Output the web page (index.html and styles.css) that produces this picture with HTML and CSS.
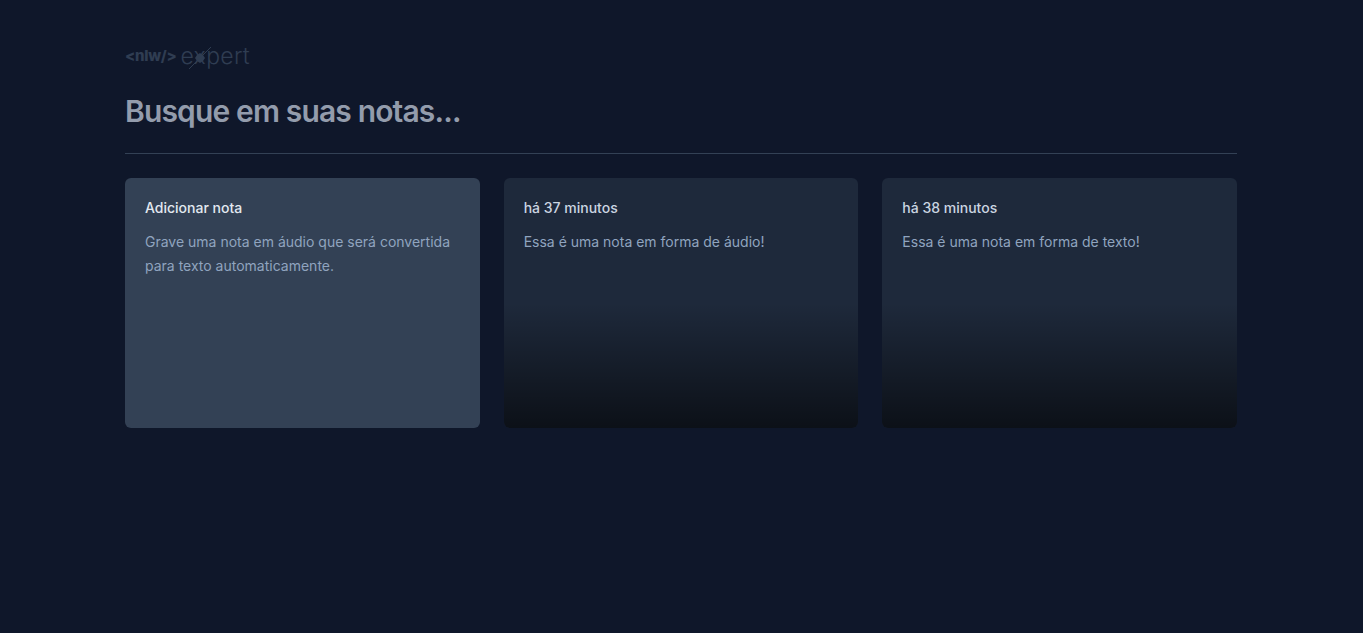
FILE: index.html
```html
<!DOCTYPE html>
<html lang="en">
<head>
    <meta charset="UTF-8">
    <meta name="viewport" content="width=device-width, initial-scale=1.0">
    <title>NLW Expert</title>
    <link rel="stylesheet" href="styles.css">
</head>
<body>
    <div class="container">
        <div class="logo">
            <span class="logo-nlw">&lt;nlw/&gt;</span>
            <span class="logo-expert">e<span class="logo-x">x<svg class="logo-spark" viewBox="0 0 24 24" aria-hidden="true">
                <path d="M12 7 L15 9 L17 12 L15 15 L12 17 L9 15 L7 12 L9 9 Z" fill="#2f3d52"/>
                <path d="M1 23 L23 1" stroke="#2f3d52" stroke-width="1"/>
            </svg></span>pert</span>
        </div>
        <form class="search">
            <input class="search-input" type="text" placeholder="Busque em suas notas...">
        </form>
        <div class="divider"></div>
        <div class="notes">
            <div class="note note-add">
                <span class="note-title">Adicionar nota</span>
                <p class="note-text">Grave uma nota em áudio que será convertida para texto automaticamente.</p>
            </div>
            <div class="note">
                <span class="note-title">há 37 minutos</span>
                <p class="note-text">Essa é uma nota em forma de áudio!</p>
                <div class="note-fade"></div>
            </div>
            <div class="note">
                <span class="note-title">há 38 minutos</span>
                <p class="note-text">Essa é uma nota em forma de texto!</p>
                <div class="note-fade"></div>
            </div>
        </div>
    </div>
</body>
</html>
```

FILE: styles.css
```css
* {
    box-sizing: border-box;
}
body {
    margin: 0;
    padding-right: 1px;
    background-color: #0f172a;
    color: #f8fafc;
    font-family: Inter, sans-serif;
}
.container {
    max-width: 1152px;
    margin: 48px auto;
    padding: 0 20px;
    display: flex;
    flex-direction: column;
    gap: 24px;
}
.logo {
    display: flex;
    align-items: center;
    gap: 4px;
    height: 15px;
    margin-bottom: 6px;
    color: #2f3d52;
}
.logo-nlw {
    font-size: 15px;
    font-weight: 800;
    letter-spacing: -0.3px;
}
.logo-expert {
    font-size: 23px;
    font-weight: 300;
    letter-spacing: 0.3px;
}
.logo-x {
    position: relative;
}
.logo-spark {
    position: absolute;
    left: -6px;
    top: 4px;
    width: 24px;
    height: 24px;
}
.search-input {
    display: block;
    width: 100%;
    height: 36px;
    padding: 0;
    border: none;
    outline: none;
    background: transparent;
    color: #f8fafc;
    font-family: inherit;
    font-size: 30px;
    font-weight: 600;
    letter-spacing: -0.85px;
}
.search-input::placeholder {
    color: #939cac;
    opacity: 1;
}
.divider {
    height: 1px;
    background-color: #334155;
}
.notes {
    display: grid;
    grid-template-columns: repeat(3, 1fr);
    grid-auto-rows: 250px;
    gap: 24px;
}
.note {
    position: relative;
    display: flex;
    flex-direction: column;
    gap: 12px;
    padding: 20px;
    border-radius: 6px;
    background-color: #1e293b;
    overflow: hidden;
}
.note-add {
    background-color: #334155;
}
.note-title {
    font-size: 14px;
    line-height: 20px;
    font-weight: 500;
    color: #cbd5e1;
}
.note-add .note-title {
    color: #e2e8f0;
}
.note-text {
    margin: 0;
    font-size: 14px;
    line-height: 24px;
    color: #90a4bf;
}
.note-fade {
    position: absolute;
    left: 0;
    right: 0;
    bottom: 0;
    height: 50%;
    background: linear-gradient(to bottom, rgba(0, 0, 0, 0), rgba(0, 0, 0, 0.6));
    pointer-events: none;
}
```
